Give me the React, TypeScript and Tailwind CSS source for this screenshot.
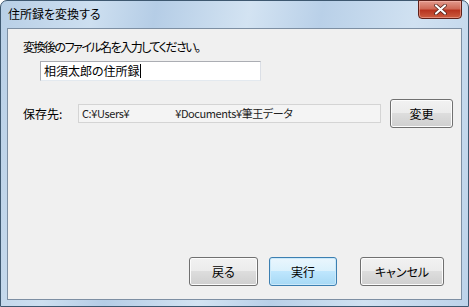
import React from 'react';

const jp = "[font-family:'Noto_Sans_CJK_JP','Noto_Sans',sans-serif] [font-feature-settings:'palt']";

function VistaButton({ label, primary, className = '' }: { label: string; primary?: boolean; className?: string }) {
  return (
    <button
      className={`h-[29px] rounded-[3px] border text-[12px] text-black ${className} ${
        primary
          ? 'border-[#3c7fb1] bg-[linear-gradient(#eaf6fd_0%,#d9f0fc_50%,#bee6fd_50%,#a7d9f5_100%)] shadow-[inset_0_0_0_1px_#cbe9fa]'
          : 'border-[#707070] bg-[linear-gradient(#f2f2f2_0%,#ebebeb_50%,#dddddd_50%,#cfcfcf_100%)] shadow-[inset_0_0_0_1px_#fcfcfc]'
      }`}
    >
      {label}
    </button>
  );
}

export default function App() {
  return (
    <div className={`w-[469px] h-[307px] overflow-hidden ${jp}`}>
      <div className="w-full h-full flex flex-col rounded-t-[7px] border border-[#3e5870] bg-[linear-gradient(100deg,#b8cfe6_0%,#cddff0_18%,#b5cde6_30%,#d3e3f2_48%,#b9d0e8_62%,#d0e1f1_80%,#bdd3ea_100%)]">
        {/* title bar */}
        <div className="h-[27px] flex items-start justify-between shrink-0">
          <span className="pl-[7px] pt-[4px] text-[12px] text-black">住所録を変換する</span>
          <div className="mr-[6px] -mt-px w-[44px] h-[19px] rounded-b-[4px] border border-[#5e2019] bg-[linear-gradient(#e39a8d_0%,#cf6a57_45%,#b8341f_55%,#cc5d40_100%)] flex items-center justify-center shadow-[inset_0_0_0_1px_rgba(255,200,190,0.45)]">
            <svg width="13" height="11" viewBox="0 0 13 11">
              <path d="M2 1.5 L11 9.5 M11 1.5 L2 9.5" stroke="#4a1b14" strokeWidth="3.6" strokeLinecap="round" />
              <path d="M2 1.5 L11 9.5 M11 1.5 L2 9.5" stroke="#ffffff" strokeWidth="2.2" strokeLinecap="round" />
            </svg>
          </div>
        </div>
        {/* client area */}
        <div className="flex-1 mx-[6px] mb-[6px] border border-[#7d8fa3] bg-[#f0f0f0] flex flex-col">
          <div className="pl-[15px] mt-[10px] text-[12px] leading-[16px] tracking-[-1.5px] text-black">変換後のファイル名を入力してください。</div>
          <div className="ml-[32px] mt-[6px] w-[221px] h-[20px] border border-[#abadb3] border-b-[#e3e9ef] border-r-[#dbdfe6] bg-white flex items-center pl-[3px] text-[12px] text-black">
            <span>相須太郎の住所録</span>
            <span className="w-px h-[14px] bg-black" />
          </div>
          <div className="mt-[18px] flex items-center">
            <span className="pl-[15px] w-[70px] text-[12px] text-black">保存先:</span>
            <div className="w-[303px] h-[19px] border border-[#d4d4d4] bg-[#f4f4f4] flex items-center pl-[3px] text-[11px] tracking-[-0.4px] text-[#222]">
              <span>C:¥Users¥</span>
              <span className="ml-[46px]">¥Documents¥筆王データ</span>
            </div>
            <VistaButton label="変更" className="ml-[9px] w-[63px] h-[28px]" />
          </div>
          <div className="flex-1" />
          <div className="mb-[13px] flex items-center">
            <VistaButton label="戻る" className="ml-[181px] w-[69px]" />
            <VistaButton label="実行" primary className="ml-[11px] w-[68px]" />
            <VistaButton label="キャンセル" className="ml-[23px] w-[84px]" />
          </div>
        </div>
      </div>
    </div>
  );
}
